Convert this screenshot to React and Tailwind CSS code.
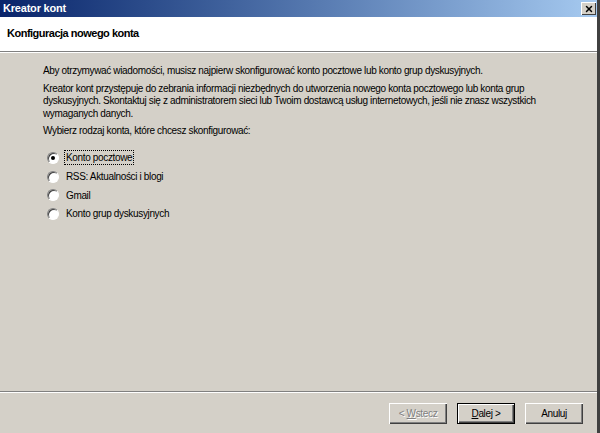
import { X } from 'lucide-react';

const font = { fontFamily: '"Liberation Sans", Tahoma, sans-serif' };

function Radio({ label, checked, focused }) {
  return (
    <label className="flex h-[18.7px] items-center gap-[5px]">
      <span className="relative flex h-[12px] w-[12px] items-center justify-center rounded-full border border-t-[#808080] border-l-[#808080] border-r-white border-b-white bg-white shadow-[inset_1px_1px_0_#404040]">
        {checked && <span className="h-[4px] w-[4px] rounded-full bg-black" />}
      </span>
      <span
        className={
          focused
            ? 'border border-dotted border-black px-[1px] leading-[13px]'
            : 'border border-transparent px-[1px] leading-[13px]'
        }
      >
        {label}
      </span>
    </label>
  );
}

function Button({ children, disabled, primary }) {
  return (
    <button
      className={
        'flex h-[21px] w-[58px] items-center justify-center bg-[#d4d0c8] ' +
        (primary
          ? 'border border-black shadow-[inset_1px_1px_0_#fff,inset_-1px_-1px_0_#404040,inset_-2px_-2px_0_#808080]'
          : 'shadow-[inset_1px_1px_0_#fff,inset_-1px_-1px_0_#404040,inset_-2px_-2px_0_#808080]') +
        (disabled ? ' text-[#808080] [text-shadow:1px_1px_0_#fff]' : ' text-black')
      }
    >
      {children}
    </button>
  );
}

export default function App() {
  return (
    <div
      className="flex h-[433px] w-[600px] flex-col overflow-hidden border-r-[3px] border-r-[#404040] bg-[#d4d0c8] text-[10px] tracking-[-0.35px] text-black"
      style={font}
    >
      <div className="flex h-[17px] shrink-0 items-center justify-between bg-gradient-to-r from-[#0a246a] to-[#a6caf0] pl-[3px] pr-[1px]">
        <span className="text-[11px] font-bold tracking-[-0.2px] text-white">Kreator kont</span>
        <span className="flex h-[13px] w-[15px] items-center justify-center bg-[#d4d0c8] shadow-[inset_1px_1px_0_#fff,inset_-1px_-1px_0_#404040]">
          <X size={10} strokeWidth={3.5} color="#000" />
        </span>
      </div>

      <div className="flex h-[35px] shrink-0 items-center border-b border-b-[#808080] bg-white pl-[7px] pb-[2px]">
        <span className="text-[11px] font-bold tracking-[-0.5px]">Konfiguracja nowego konta</span>
      </div>
      <div className="h-px shrink-0 bg-white" />

      <div className="flex flex-1 flex-col pl-[43px] pt-[12px] leading-[12.5px]">
        <p>Aby otrzymywać wiadomości, musisz najpierw skonfigurować konto pocztowe lub konto grup dyskusyjnych.</p>
        <p className="mt-[5px]">
          Kreator kont przystępuje do zebrania informacji niezbędnych do utworzenia nowego konta pocztowego lub konta grup
          <br />
          dyskusyjnych. Skontaktuj się z administratorem sieci lub Twoim dostawcą usług internetowych, jeśli nie znasz wszystkich
          <br />
          wymaganych danych.
        </p>
        <p className="mt-[5px]">Wybierz rodzaj konta, które chcesz skonfigurować:</p>

        <div className="mt-[11px] flex flex-col pl-[4px]">
          <Radio label="Konto pocztowe" checked focused />
          <Radio label="RSS: Aktualności i blogi" />
          <Radio label="Gmail" />
          <Radio label="Konto grup dyskusyjnych" />
        </div>
      </div>

      <div className="h-px shrink-0 bg-[#808080]" />
      <div className="h-px shrink-0 bg-white" />
      <div className="flex h-[40px] shrink-0 items-start pt-[10px] pl-[389px]">
        <Button disabled>
          &lt;&nbsp;<span className="underline">W</span>stecz
        </Button>
        <div className="ml-[10px]">
          <Button primary>
            <span className="underline">D</span>alej &gt;
          </Button>
        </div>
        <div className="ml-[10px]">
          <Button>Anuluj</Button>
        </div>
      </div>
    </div>
  );
}
